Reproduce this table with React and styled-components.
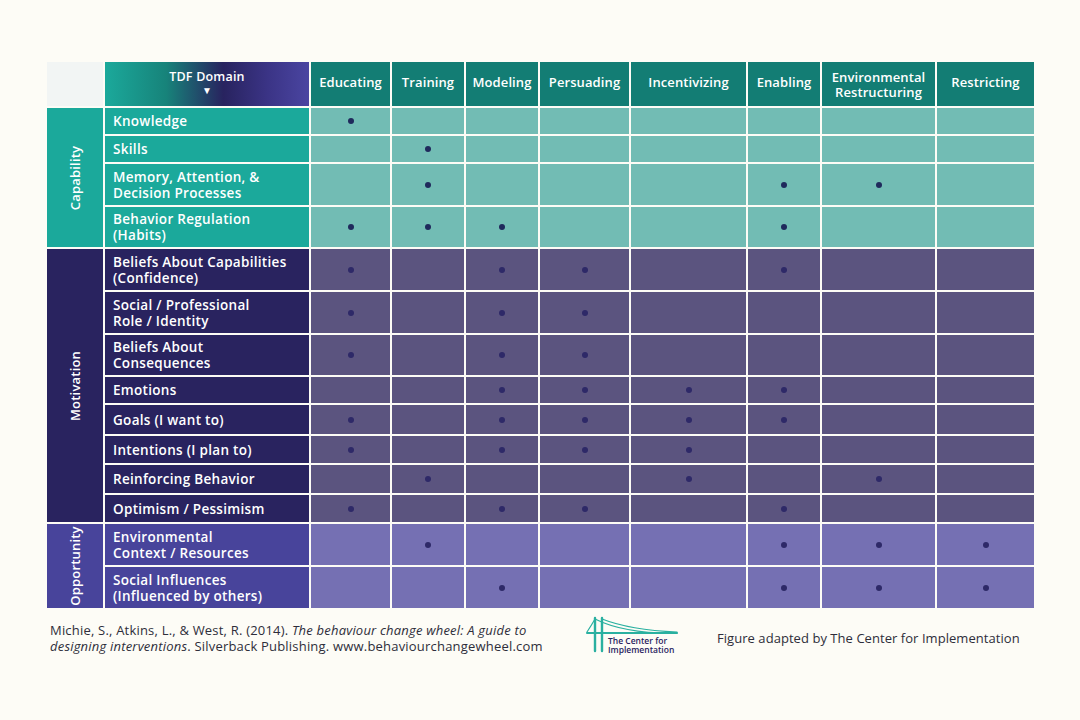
import React from 'react';
import styled, { createGlobalStyle } from 'styled-components';

const GlobalStyle = createGlobalStyle`
  html, body {
    margin: 0;
    padding: 0;
    background: #fdfcf6;
  }
  body {
    font-family: 'Open Sans', 'Liberation Sans', sans-serif;
  }
`;

const palette = {
  capability: { side: '#1ba99b', cell: '#72bcb4', dot: '#1f2a5c' },
  motivation: { side: '#29235f', cell: '#5b547f', dot: '#2e2968' },
  opportunity: { side: '#48449b', cell: '#7570b3', dot: '#2e2968' },
};

const columns = [
  'Educating',
  'Training',
  'Modeling',
  'Persuading',
  'Incentivizing',
  'Enabling',
  'Environmental Restructuring',
  'Restricting',
];

// each row: label, marks per column (1 = dot)
const groups = [
  {
    name: 'Capability',
    key: 'capability',
    rows: [
      ['Knowledge', [1, 0, 0, 0, 0, 0, 0, 0]],
      ['Skills', [0, 1, 0, 0, 0, 0, 0, 0]],
      ['Memory, Attention, & Decision Processes', [0, 1, 0, 0, 0, 1, 1, 0]],
      ['Behavior Regulation (Habits)', [1, 1, 1, 0, 0, 1, 0, 0]],
    ],
  },
  {
    name: 'Motivation',
    key: 'motivation',
    rows: [
      ['Beliefs About Capabilities (Confidence)', [1, 0, 1, 1, 0, 1, 0, 0]],
      ['Social / Professional Role / Identity', [1, 0, 1, 1, 0, 0, 0, 0]],
      ['Beliefs About Consequences', [1, 0, 1, 1, 0, 0, 0, 0]],
      ['Emotions', [0, 0, 1, 1, 1, 1, 0, 0]],
      ['Goals (I want to)', [1, 0, 1, 1, 1, 1, 0, 0]],
      ['Intentions (I plan to)', [1, 0, 1, 1, 1, 0, 0, 0]],
      ['Reinforcing Behavior', [0, 1, 0, 0, 1, 0, 1, 0]],
      ['Optimism / Pessimism', [1, 0, 1, 1, 0, 1, 0, 0]],
    ],
  },
  {
    name: 'Opportunity',
    key: 'opportunity',
    rows: [
      ['Environmental Context / Resources', [0, 1, 0, 0, 0, 1, 1, 1]],
      ['Social Influences (Influenced by others)', [0, 0, 1, 0, 0, 1, 1, 1]],
    ],
  },
];

const labelLines = {
  'Memory, Attention, & Decision Processes': ['Memory, Attention, &', 'Decision Processes'],
  'Behavior Regulation (Habits)': ['Behavior Regulation', '(Habits)'],
  'Beliefs About Capabilities (Confidence)': ['Beliefs About Capabilities', '(Confidence)'],
  'Social / Professional Role / Identity': ['Social / Professional', 'Role / Identity'],
  'Beliefs About Consequences': ['Beliefs About', 'Consequences'],
  'Environmental Context / Resources': ['Environmental', 'Context / Resources'],
  'Social Influences (Influenced by others)': ['Social Influences', '(Influenced by others)'],
  'Environmental Restructuring': ['Environmental', 'Restructuring'],
};

const rowHeights = [26, 26, 41, 40, 41, 41, 40, 26, 29, 27, 28, 27, 41, 41];

const Page = styled.div`
  width: 1080px;
  height: 720px;
  padding: 62px 0 0 47px;
  box-sizing: border-box;
  display: flex;
  flex-direction: column;
`;

const Table = styled.div`
  display: grid;
  width: 987px;
  grid-template-columns: 56px 204px 79px 72px 72px 89px 115px 72px 113px 97px;
  grid-template-rows: 44px ${rowHeights.map(h => `${h}px`).join(' ')};
  gap: 2px;
`;

const Corner = styled.div`
  background: #f2f5f4;
`;

const DomainHeader = styled.div`
  background: linear-gradient(90deg, #1ba99b 0%, #17837a 30%, #28235f 58%, #3b3486 80%, #4a45a1 100%);
  color: #fff;
  font-size: 12.5px;
  font-weight: 600;
  letter-spacing: 0.2px;
  display: flex;
  flex-direction: column;
  align-items: center;
  padding-top: 8px;
  line-height: 14px;
`;

const Arrow = styled.span`
  font-size: 10px;
  line-height: 12px;
`;

const ColHeader = styled.div`
  background: #137d74;
  color: #fff;
  font-size: 13px;
  font-weight: 600;
  display: flex;
  align-items: center;
  justify-content: center;
  text-align: center;
  line-height: 15px;
  letter-spacing: 0.1px;
  padding: ${p => (p.$multi ? '2px 0 0' : '0 0 4px')};
`;

const Side = styled.div`
  grid-row: span ${p => p.$span};
  background: ${p => p.$bg};
  display: flex;
  align-items: center;
  justify-content: center;
`;

const SideText = styled.span`
  transform: rotate(-90deg);
  color: #fff;
  font-size: 13px;
  font-weight: 600;
  letter-spacing: 0.2px;
  white-space: nowrap;
`;

const Label = styled.div`
  background: ${p => p.$bg};
  color: #fff;
  font-size: 13.5px;
  font-weight: 600;
  letter-spacing: 0.3px;
  line-height: 16px;
  padding-left: 8px;
  display: flex;
  flex-direction: column;
  justify-content: center;
  white-space: nowrap;
`;

const Cell = styled.div`
  background: ${p => p.$bg};
  display: flex;
  align-items: center;
  justify-content: center;
`;

const Dot = styled.span`
  width: 6px;
  height: 6px;
  border-radius: 50%;
  background: ${p => p.$color};
`;

const Footer = styled.div`
  display: flex;
  align-items: center;
  width: 987px;
  margin-top: 14px;
`;

const Citation = styled.p`
  margin: 0 0 0 3px;
  width: 532px;
  font-size: 13px;
  letter-spacing: 0.2px;
  line-height: 16px;
  color: #2e2e3a;
  white-space: nowrap;
  em {
    font-style: italic;
  }
`;

const Logo = styled.div`
  display: flex;
  align-items: flex-end;
  position: relative;
  width: 95px;
  height: 38px;
  margin-left: 3px;
  margin-top: -6px;
`;

const LogoText = styled.div`
  position: absolute;
  left: 23px;
  top: 20px;
  font-size: 8.5px;
  font-weight: 600;
  line-height: 9px;
  color: #29235f;
  white-space: nowrap;
`;

const Adapted = styled.p`
  margin: 0 0 0 37px;
  font-size: 13px;
  letter-spacing: 0.05px;
  color: #2e2e3a;
  white-space: nowrap;
`;

const BridgeLogo = () => (
  <svg width="95" height="38" viewBox="0 0 95 38" fill="none" stroke="#2ab0a0" strokeLinecap="round">
    <path d="M10 2 V35" strokeWidth="2.4" />
    <path d="M17 2 V35" strokeWidth="2.4" />
    <path d="M2 17 H92" strokeWidth="2" />
    <path d="M10 3 Q 40 18 92 17" strokeWidth="1.2" />
    <path d="M17 3 Q 45 14 92 16" strokeWidth="1.2" />
    <path d="M10 3 Q 6 10 2 16" strokeWidth="1.2" />
  </svg>
);

const App = () => {
  return (
    <>
      <GlobalStyle />
      <Page>
        <Table>
          <Corner />
          <DomainHeader>
            TDF Domain
            <Arrow>▼</Arrow>
          </DomainHeader>
          {columns.map(c => (
            <ColHeader key={c} $multi={!!labelLines[c]}>
              {labelLines[c] ? (
                <span>
                  {labelLines[c][0]}
                  <br />
                  {labelLines[c][1]}
                </span>
              ) : (
                c
              )}
            </ColHeader>
          ))}
          {groups.map(group => {
            const colors = palette[group.key];
            return group.rows.map(([label, marks], i) => (
              <React.Fragment key={label}>
                {i === 0 && (
                  <Side $span={group.rows.length} $bg={colors.side}>
                    <SideText>{group.name}</SideText>
                  </Side>
                )}
                <Label $bg={colors.side}>
                  {labelLines[label]
                    ? labelLines[label].map(l => <span key={l}>{l}</span>)
                    : label}
                </Label>
                {marks.map((m, j) => (
                  <Cell key={j} $bg={colors.cell}>
                    {m ? <Dot $color={colors.dot} /> : null}
                  </Cell>
                ))}
              </React.Fragment>
            ));
          })}
        </Table>
        <Footer>
          <Citation>
            Michie, S., Atkins, L., &amp; West, R. (2014). <em>The behaviour change wheel: A guide to</em>
            <br />
            <em>designing interventions</em>. Silverback Publishing. www.behaviourchangewheel.com
          </Citation>
          <Logo>
            <BridgeLogo />
            <LogoText>
              The Center for
              <br />
              Implementation
            </LogoText>
          </Logo>
          <Adapted>Figure adapted by The Center for Implementation</Adapted>
        </Footer>
      </Page>
    </>
  );
};

export default App;
